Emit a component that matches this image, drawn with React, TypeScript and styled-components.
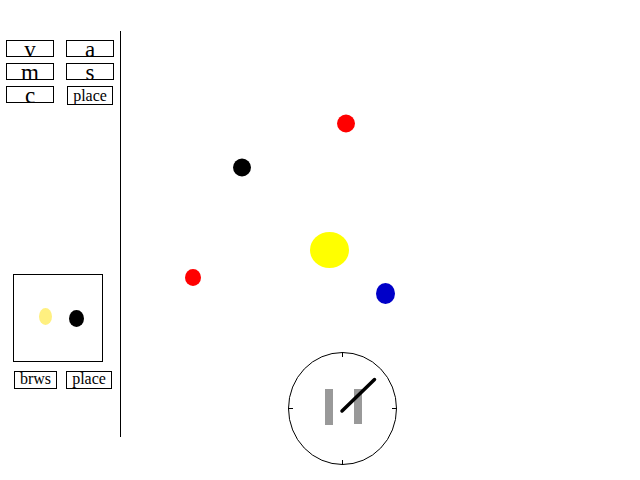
import styled, { createGlobalStyle } from 'styled-components'

const GlobalStyle = createGlobalStyle`
  html, body {
    margin: 0;
    padding: 0;
    background: #fff;
    font-family: 'Liberation Serif', 'Times New Roman', serif;
  }
`

type Body = { x: number; y: number; rx: number; ry: number; fill: string }

const bodies: Body[] = [
  { x: 346, y: 123.5, rx: 9, ry: 9, fill: '#ff0000' },
  { x: 242, y: 167.5, rx: 9, ry: 9, fill: '#000000' },
  { x: 329.5, y: 250, rx: 19.5, ry: 18, fill: '#ffff00' },
  { x: 193, y: 277.5, rx: 8, ry: 8.5, fill: '#ff0000' },
  { x: 385.5, y: 293.5, rx: 9.5, ry: 10.5, fill: '#0000c8' },
]

const topButtons = [
  { label: 'v', small: false },
  { label: 'a', small: false },
  { label: 'm', small: false },
  { label: 's', small: false },
  { label: 'c', small: false },
  { label: 'place', small: true },
]

export default function App() {
  return (
    <>
      <GlobalStyle />
      <Page>
        <Panel>
          <ButtonGrid>
            {topButtons.map((b) => (
              <Btn key={b.label} small={b.small}>
                {b.label}
              </Btn>
            ))}
          </ButtonGrid>
          <Preview>
            <svg width="88" height="86" viewBox="14 275 88 86">
              <ellipse cx="45.5" cy="316.5" rx="6.5" ry="8.5" fill="#fff080" />
              <ellipse cx="76.5" cy="318.5" rx="7.5" ry="8.5" fill="#000" />
            </svg>
          </Preview>
          <BottomRow>
            <SmallBtn w={43}>brws</SmallBtn>
            <SmallBtn w={46}>place</SmallBtn>
          </BottomRow>
        </Panel>
        <Space>
          <svg width="519" height="480" viewBox="121 0 519 480">
            {bodies.map((b, i) => (
              <ellipse key={i} cx={b.x} cy={b.y} rx={b.rx} ry={b.ry} fill={b.fill} />
            ))}
            <ellipse cx="342.5" cy="408.5" rx="54" ry="56" fill="none" stroke="#000" strokeWidth="1" />
            <line x1="342.5" y1="352" x2="342.5" y2="357" stroke="#000" />
            <line x1="342.5" y1="460" x2="342.5" y2="465" stroke="#000" />
            <line x1="288" y1="408.5" x2="293" y2="408.5" stroke="#000" />
            <line x1="392" y1="408.5" x2="397" y2="408.5" stroke="#000" />
            <rect x="325" y="389" width="8" height="36" fill="#999" />
            <rect x="354" y="389" width="8" height="35" fill="#999" />
            <line x1="342" y1="411" x2="374.5" y2="379.5" stroke="#000" strokeWidth="3.5" strokeLinecap="round" />
          </svg>
        </Space>
      </Page>
    </>
  )
}

const Page = styled.div`
  display: flex;
  width: 640px;
  height: 480px;
  overflow: hidden;
`

const Panel = styled.div`
  box-sizing: border-box;
  width: 121px;
  height: 406px;
  margin-top: 31px;
  padding-top: 9px;
  border-right: 1px solid #000;
  display: flex;
  flex-direction: column;
`

const ButtonGrid = styled.div`
  display: grid;
  grid-template-columns: 48px 48px;
  grid-auto-rows: 17px;
  column-gap: 12px;
  row-gap: 6px;
  padding-left: 6px;
`

const Btn = styled.div<{ small: boolean }>`
  box-sizing: border-box;
  border: 1px solid #000;
  background: #fff;
  display: flex;
  align-items: center;
  justify-content: center;
  font-size: ${({ small }) => (small ? '16px' : '23px')};
  line-height: 1;
  padding-top: ${({ small }) => (small ? '0' : '2px')};
  overflow: visible;
  height: ${({ small }) => (small ? '19px' : '17px')};
  width: ${({ small }) => (small ? '46px' : '48px')};
  margin-left: ${({ small }) => (small ? '1px' : '0')};
`

const Preview = styled.div`
  box-sizing: border-box;
  margin: 171px 0 0 13px;
  width: 90px;
  height: 88px;
  border: 1px solid #000;
`

const BottomRow = styled.div`
  display: flex;
  gap: 9px;
  margin: 9px 0 0 14px;
`

const SmallBtn = styled.div<{ w: number }>`
  box-sizing: border-box;
  width: ${({ w }) => w}px;
  height: 18px;
  border: 1px solid #000;
  display: flex;
  align-items: flex-start;
  justify-content: center;
  font-size: 16px;
  line-height: 14px;
`

const Space = styled.div`
  flex: 1;
  display: flex;
`
